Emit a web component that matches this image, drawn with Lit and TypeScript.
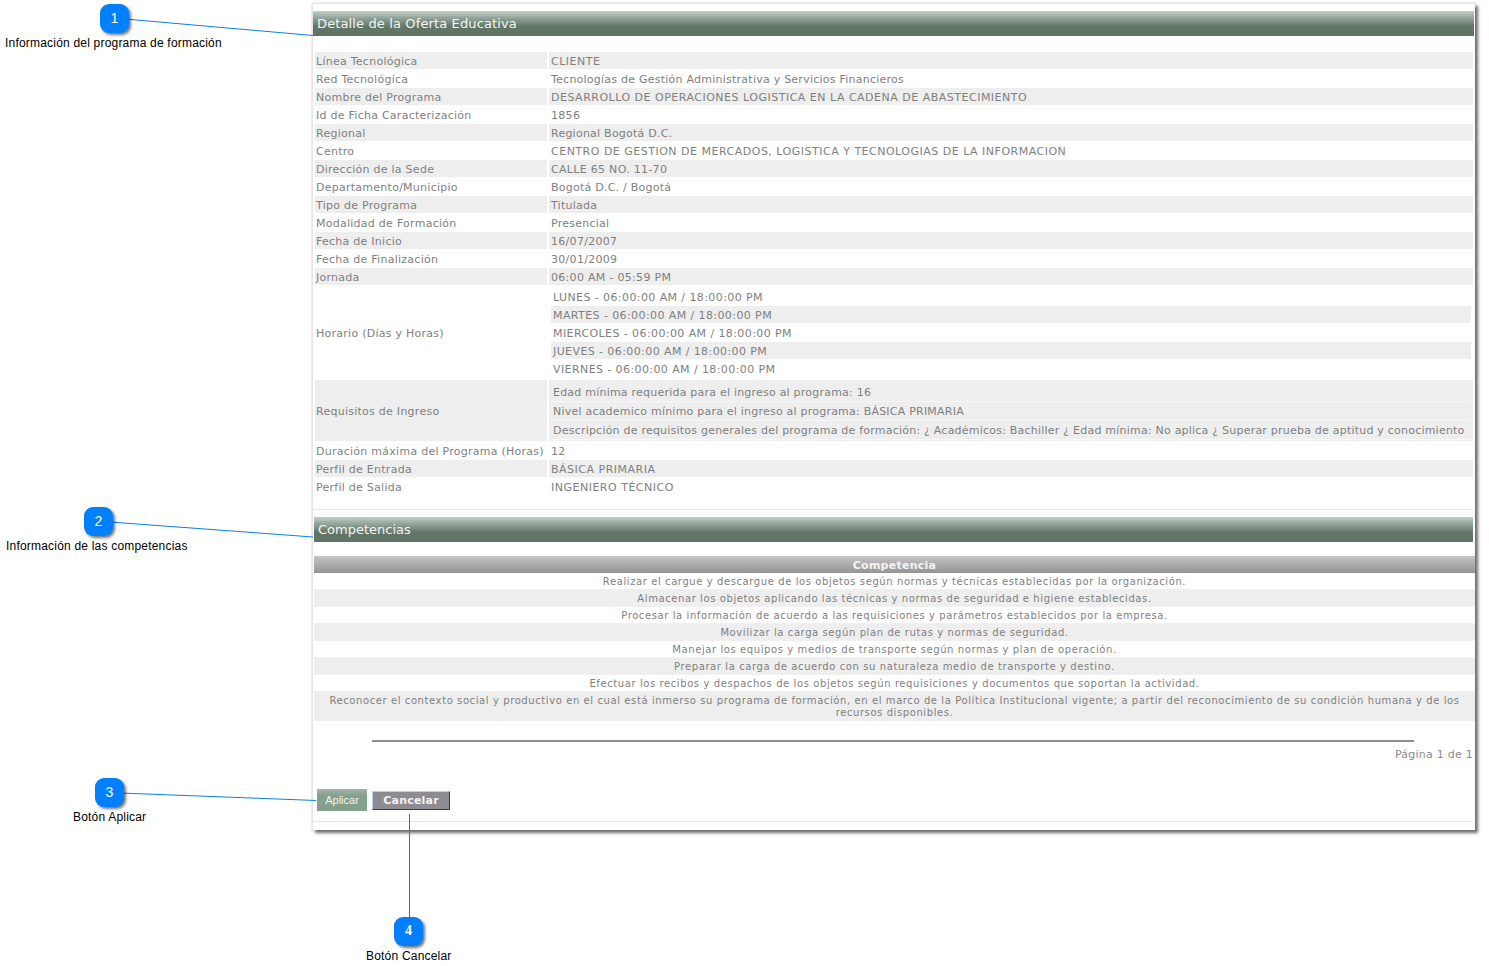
import { LitElement, html, css, svg } from "lit";
import { customElement } from "lit/decorators.js";

const rows: [string, string][] = [
  ["Línea Tecnológica", "CLIENTE"],
  ["Red Tecnológica", "Tecnologías de Gestión Administrativa y Servicios Financieros"],
  ["Nombre del Programa", "DESARROLLO DE OPERACIONES LOGISTICA EN LA CADENA DE ABASTECIMIENTO"],
  ["Id de Ficha Caracterización", "1856"],
  ["Regional", "Regional Bogotá D.C."],
  ["Centro", "CENTRO DE GESTION DE MERCADOS, LOGISTICA Y TECNOLOGIAS DE LA INFORMACION"],
  ["Dirección de la Sede", "CALLE 65 NO. 11-70"],
  ["Departamento/Municipio", "Bogotá D.C. / Bogotá"],
  ["Tipo de Programa", "Titulada"],
  ["Modalidad de Formación", "Presencial"],
  ["Fecha de Inicio", "16/07/2007"],
  ["Fecha de Finalización", "30/01/2009"],
  ["Jornada", "06:00 AM - 05:59 PM"],
];
const horario = [
  "LUNES - 06:00:00 AM / 18:00:00 PM",
  "MARTES - 06:00:00 AM / 18:00:00 PM",
  "MIERCOLES - 06:00:00 AM / 18:00:00 PM",
  "JUEVES - 06:00:00 AM / 18:00:00 PM",
  "VIERNES - 06:00:00 AM / 18:00:00 PM",
];
const requisitos = [
  "Edad mínima requerida para el ingreso al programa: 16",
  "Nivel academico mínimo para el ingreso al programa: BÁSICA PRIMARIA",
  "Descripción de requisitos generales del programa de formación: ¿ Académicos: Bachiller ¿ Edad mínima: No aplica ¿ Superar prueba de aptitud y conocimiento",
];
const tail: [string, string][] = [
  ["Duración máxima del Programa (Horas)", "12"],
  ["Perfil de Entrada", "BÁSICA PRIMARIA"],
  ["Perfil de Salida", "INGENIERO TÉCNICO"],
];
const competencias = [
  "Realizar el cargue y descargue de los objetos según normas y técnicas establecidas por la organización.",
  "Almacenar los objetos aplicando las técnicas y normas de seguridad e higiene establecidas.",
  "Procesar la información de acuerdo a las requisiciones y parámetros establecidos por la empresa.",
  "Movilizar la carga según plan de rutas y normas de seguridad.",
  "Manejar los equipos y medios de transporte según normas y plan de operación.",
  "Preparar la carga de acuerdo con su naturaleza medio de transporte y destino.",
  "Efectuar los recibos y despachos de los objetos según requisiciones y documentos que soportan la actividad.",
  "Reconocer el contexto social y productivo en el cual está inmerso su programa de formación, en el marco de la Política Institucional vigente; a partir del reconocimiento de su condición humana y de los recursos disponibles.",
];
const callouts = [
  { n: 1, x: 100, y: 4, lx: 5, ly: 36, t: "Información del programa de formación" },
  { n: 2, x: 84, y: 507, lx: 6, ly: 539, t: "Información de las competencias" },
  { n: 3, x: 95, y: 778, lx: 73, ly: 810, t: "Botón Aplicar" },
  { n: 4, x: 394, y: 917, lx: 366, ly: 949, t: "Botón Cancelar" },
];

@customElement("app-root")
export class AppRoot extends LitElement {
  static styles = css`
    :host { display: block; position: relative; width: 1489px; height: 966px; background: #fff; overflow: hidden; font-family: "DejaVu Sans", Verdana, sans-serif; }
    .page { padding: 3px 0 0 312px; }
    .panel { width: 1163px; height: 827px; box-sizing: border-box; background: #fff; border: 1px solid #e6e6e6; border-right: 0; border-bottom: 0; box-shadow: 3px 3px 3px #6e6e6e, 0 0 2px #ccc; display: flex; flex-direction: column; padding-top: 7px; }
    .bar { height: 25px; background: linear-gradient(#c3cec8 0%, #8fa196 30%, #627668 62%, #5f7465 100%); color: #f4f6f4; font-size: 13px; line-height: 25px; padding-left: 4px; letter-spacing: 0.13px; white-space: nowrap; margin-right: 1px; flex: none; }
    .table { display: flex; flex-direction: column; margin: 16px 2px 0 2px; color: #7f7f7f; font-size: 11px; letter-spacing: 0.24px; }
    .r { display: grid; grid-template-columns: 232px 1fr; column-gap: 2px; }
    .c { height: 17px; line-height: 19px; padding-left: 2px; margin-bottom: 1px; white-space: nowrap; }
    .c.lbl { padding-left: 1px; letter-spacing: 0.26px; }
    .c.up { letter-spacing: 0.5px; }
    .c.num { letter-spacing: 0.3px; }
    .alt .c { background: #eee; }
    .tall .c { height: auto; display: flex; align-items: center; }
    .nest { flex-direction: column; align-items: stretch !important; padding: 2px; }
    .nest div { height: 17px; line-height: 19px; padding-left: 2px; margin-bottom: 1px; }
    .h { height: 94px; }
    .h .nest div { letter-spacing: 0.41px; }
    .h .nest .g { background: #eee; }
    .q { height: 62px; }
    .q .c.lbl { padding-top: 2px; box-sizing: border-box; }
    .q .nest { background: #eee; padding-top: 3px; padding-bottom: 1px; letter-spacing: 0.22px; }
    .q .nest div { height: 18px; line-height: 20px; background: #eee; border-bottom: 1px solid #f7f7f7; margin: 0; }
    .rule { height: 1px; background: #e4e4e4; margin: 13px 1px 7px 1px; flex: none; }
    .bar2 { font-size: 13px; margin-left: 1px; margin-right: 2px; letter-spacing: 0; }
    .grid { margin: 14px 0 0 1px; font-size: 10px; color: #7f7f7f; text-align: center; }
    .gh { height: 17px; line-height: 20px; background: linear-gradient(#c6c4c6, #959495); color: #f4f4f4; font-weight: bold; font-size: 11px; letter-spacing: 0.25px; }
    .gr { box-sizing: border-box; min-height: 17px; line-height: 12px; padding: 3px 10px 1px; letter-spacing: 0.59px; border-bottom: 1px solid #f0f0f0; }
    .gr:nth-child(even) { background: #eee; }
    .gr:last-child { border-bottom: 0; padding-bottom: 2px; }
    .pager { margin: 19px 2px 0 59px; font-size: 11px; color: #8a8a8a; text-align: right; }
    .pager hr { margin: 0 59px 0 0; border: 0; height: 2px; background: #8e8e8e; }
    .pager span { display: block; margin-top: 6px; line-height: 14px; letter-spacing: 0.25px; }
    .btns { display: flex; align-items: center; gap: 5px; margin: 27px 0 0 4px; }
    .ap { width: 50px; height: 22px; box-sizing: border-box; border: 0; padding: 0; background: linear-gradient(#a3b4a9, #87a08e 30%, #82a08b); color: #eef2ee; font: 11px "Liberation Sans", Arial, sans-serif; }
    .ca { width: 78px; height: 19px; box-sizing: border-box; padding: 1px 0 0; border: 1px solid; border-color: #b5d5ee #3a3a3a #3a3a3a #b5d5ee; background: #8f8c91; color: #f3f3f5; font: bold 11px/16px "DejaVu Sans", Verdana, sans-serif; letter-spacing: 0.2px; }
    .foot { height: 1px; background: #e4e4e4; margin: 10px 1px 0 1px; }
    .overlay { position: absolute; left: 0; top: 0; pointer-events: none; }
    .badge { position: absolute; width: 29px; height: 29px; border-radius: 9px; background: #0080ff; box-shadow: 2px 2px 3px rgba(0,0,0,.55); color: #fff; font: 14px/28px "Liberation Sans", Arial, sans-serif; text-align: center; }
    .badge.serif { font: bold 14px/28px "Liberation Serif", serif; }
    .lab { position: absolute; color: #000; font: 12px/14px "Liberation Sans", Arial, sans-serif; letter-spacing: 0.2px; white-space: nowrap; }
  `;

  private val(t: string) {
    if (/\d/.test(t)) return "num";
    return t === t.toUpperCase() ? "up" : "";
  }

  render() {
    return html`
      <div class="page">
        <div class="panel">
          <div class="bar">Detalle de la Oferta Educativa</div>
          <div class="table">
            ${rows.map((r, i) => html`<div class="r ${i % 2 ? "" : "alt"}"><div class="c lbl">${r[0]}</div><div class="c ${this.val(r[1])}">${r[1]}</div></div>`)}
            <div class="r tall h">
              <div class="c lbl">Horario (Días y Horas)</div>
              <div class="c nest">${horario.map((t, i) => html`<div class=${i % 2 ? "g" : ""}>${t}</div>`)}</div>
            </div>
            <div class="r tall q alt">
              <div class="c lbl">Requisitos de Ingreso</div>
              <div class="c nest">${requisitos.map((t) => html`<div>${t}</div>`)}</div>
            </div>
            ${tail.map((r, i) => html`<div class="r ${i === 1 ? "alt" : ""}"><div class="c lbl">${r[0]}</div><div class="c ${this.val(r[1])}">${r[1]}</div></div>`)}
          </div>
          <div class="rule"></div>
          <div class="bar bar2">Competencias</div>
          <div class="grid">
            <div class="gh">Competencia</div>
            <div class="rows">${competencias.map((t) => html`<div class="gr">${t}</div>`)}</div>
          </div>
          <div class="pager"><hr /><span>Página 1 de 1</span></div>
          <div class="btns"><button class="ap">Aplicar</button><button class="ca">Cancelar</button></div>
          <div class="foot"></div>
        </div>
      </div>
      <svg class="overlay" width="1489" height="966">
        ${svg`<g stroke="#0a7fe8" stroke-width="1" fill="none">
          <line x1="125" y1="19" x2="313" y2="35.5"/>
          <line x1="110" y1="522" x2="313" y2="537"/>
          <line x1="120" y1="793" x2="316" y2="800.5"/>
          <line x1="409.5" y1="814" x2="409.5" y2="920"/>
        </g>`}
      </svg>
      ${callouts.map((c) => html`
        <div class="badge ${c.n === 4 ? "serif" : ""}" style="left:${c.x}px;top:${c.y}px">${c.n}</div>
        <div class="lab" style="left:${c.lx}px;top:${c.ly}px">${c.t}</div>`)}
    `;
  }
}
